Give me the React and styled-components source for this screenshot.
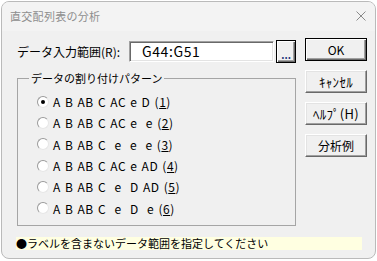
import styled, { createGlobalStyle } from 'styled-components'

const GlobalStyle = createGlobalStyle`
  html, body {
    margin: 0;
    padding: 0;
    background: #ffffff;
  }
  body {
    font-family: "Noto Sans CJK JP", "Noto Sans", sans-serif;
    color: #000000;
  }
`

const Window = styled.div`
  margin: 1px 0 0 1px;
  width: 375px;
  height: 258px;
  box-sizing: border-box;
  border: 1px solid #bababa;
  border-radius: 8px;
  background: #f0f0f0;
  overflow: hidden;
  display: flex;
  flex-direction: column;
`

const TitleBar = styled.div`
  height: 29px;
  flex: none;
  box-sizing: border-box;
  display: flex;
  align-items: center;
  justify-content: space-between;
  padding: 0 9px 2px 8px;
  background: #f3f3f3;
`

const Title = styled.div`
  font-size: 11px;
  letter-spacing: 0.3px;
  color: #8e8e8e;
`

const Body = styled.div`
  display: flex;
  flex-direction: column;
  padding: 8px 0 0 15px;
`

const Top = styled.div`
  display: flex;
  gap: 9px;
`

const LeftCol = styled.div`
  width: 279px;
  display: flex;
  flex-direction: column;
`

const FieldRow = styled.div`
  margin-top: 1px;
  height: 23px;
  display: flex;
  align-items: center;
`

const Label = styled.div`
  font-size: 12px;
  white-space: nowrap;
`

const Input = styled.div`
  margin-left: auto;
  width: 145px;
  height: 21px;
  box-sizing: border-box;
  border: 1px solid;
  border-color: #a0a0a0 #ffffff #ffffff #a0a0a0;
  box-shadow: inset 1px 1px 0 #696969, inset -1px -1px 0 #e3e3e3;
  background: #ffffff;
  font-size: 14px;
  line-height: 19px;
  padding-left: 12px;
  letter-spacing: 0.6px;
`

const Button = styled.button`
  width: ${p => p.w || 62}px;
  height: 23px;
  box-sizing: border-box;
  padding: 0;
  margin: 0;
  font-family: inherit;
  font-size: ${p => p.$kana ? 13 : 12}px;
  letter-spacing: ${p => p.$kana ? 0.3 : 0}px;
  font-weight: normal;
  color: #000000;
  background: #f0f0f0;
  border: 1px solid;
  border-color: ${p => p.$default ? '#000000' : '#ffffff #696969 #696969 #ffffff'};
  box-shadow: ${p => p.$default
    ? 'inset 1px 1px 0 #ffffff, inset -1px -1px 0 #696969, inset -2px -2px 0 #a0a0a0'
    : 'inset -1px -1px 0 #a0a0a0, inset 1px 1px 0 #e3e3e3'};
  display: flex;
  align-items: center;
  justify-content: center;
`

const BrowseButton = styled(Button)`
  margin-left: 2px;
  align-items: flex-end;
  padding-bottom: 4px;
  font-size: 10px;
  font-weight: bold;
  line-height: 6px;
  color: #23357a;
`

const ButtonCol = styled.div`
  margin-top: -1px;
  display: flex;
  flex-direction: column;
  gap: 9px;
`

const Group = styled.fieldset`
  margin: 8px 0 0 0;
  padding: 0 0 6px 0;
  border: 1px solid #a5a5a5;
  min-width: 0;
`

const Legend = styled.legend`
  margin-left: 11px;
  padding: 0 2px;
  font-size: 11px;
  line-height: 14px;
`

const RadioList = styled.div`
  padding: 6px 0 0 19px;
  display: flex;
  flex-direction: column;
`

const RadioRow = styled.div`
  height: 21.3px;
  display: flex;
  align-items: center;
  gap: 4px;
`

const RadioCircle = styled.span`
  width: 12px;
  height: 12px;
  box-sizing: border-box;
  border-radius: 50%;
  border: 1px solid;
  border-color: #9a9a9a #e6e6e6 #e6e6e6 #9a9a9a;
  background: #ffffff;
  display: flex;
  align-items: center;
  justify-content: center;
  &::after {
    content: '';
    width: 4px;
    height: 4px;
    border-radius: 50%;
    background: ${p => p.$checked ? '#000000' : 'transparent'};
  }
`

const RadioText = styled.span`
  font-size: 12px;
  white-space: pre;
  letter-spacing: 0.5px;
  word-spacing: 1px;
`

const Hint = styled.div`
  margin: 11px 0 0 -1px;
  width: 346px;
  height: 13px;
  background: #ffffe1;
  font-size: 11px;
  line-height: 13px;
  white-space: nowrap;
`

const CloseIcon = () => (
  <svg width="10" height="10" viewBox="0 0 10 10">
    <path d="M0.5 0.5 L9.5 9.5 M9.5 0.5 L0.5 9.5" stroke="#8a8a8a" strokeWidth="1" fill="none" />
  </svg>
)

const patterns = [
  ['A B AB C AC e D ', '1'],
  ['A B AB C AC e  e ', '2'],
  ['A B AB C  e  e  e ', '3'],
  ['A B AB C AC e AD ', '4'],
  ['A B AB C  e  D AD ', '5'],
  ['A B AB C  e  D  e ', '6'],
]

export default function App() {
  return (
    <>
      <GlobalStyle />
      <Window>
        <TitleBar>
          <Title>直交配列表の分析</Title>
          <CloseIcon />
        </TitleBar>
        <Body>
          <Top>
            <LeftCol>
              <FieldRow>
                <Label>データ入力範囲(R):</Label>
                <Input>G44:G51</Input>
                <BrowseButton w={20} $default>...</BrowseButton>
              </FieldRow>
              <Group>
                <Legend>データの割り付けパターン</Legend>
                <RadioList>
                  {patterns.map(([text, n], i) => (
                    <RadioRow key={n}>
                      <RadioCircle $checked={i === 0} />
                      <RadioText>{text}(<u>{n}</u>)</RadioText>
                    </RadioRow>
                  ))}
                </RadioList>
              </Group>
            </LeftCol>
            <ButtonCol>
              <Button $default>OK</Button>
              <Button $kana>ｷｬﾝｾﾙ</Button>
              <Button $kana>ﾍﾙﾌﾟ(H)</Button>
              <Button>分析例</Button>
            </ButtonCol>
          </Top>
          <Hint>●ラベルを含まないデータ範囲を指定してください</Hint>
        </Body>
      </Window>
    </>
  )
}
